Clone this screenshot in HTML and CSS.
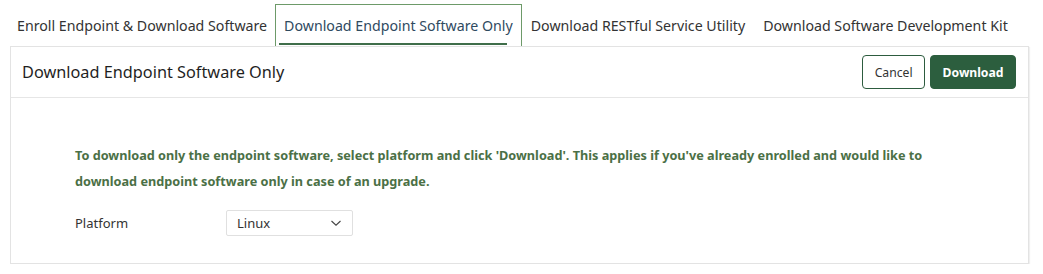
FILE: index.html
```html
<!DOCTYPE html>
<html lang="en">
<head>
  <meta charset="UTF-8">
  <title>Download Endpoint Software</title>
  <link rel="stylesheet" href="styles.css">
</head>
<body>
  <div class="tabs">
    <div class="tab">Enroll Endpoint &amp; Download Software</div>
    <div class="tab active">Download Endpoint Software Only</div>
    <div class="tab">Download RESTful Service Utility</div>
    <div class="tab">Download Software Development Kit</div>
  </div>

  <div class="card">
    <div class="card-header">
      <div class="card-title">Download Endpoint Software Only</div>
      <div class="actions">
        <button class="btn btn-outline">Cancel</button>
        <button class="btn btn-primary">Download</button>
      </div>
    </div>

    <div class="card-body">
      <p class="info">To download only the endpoint software, select platform and click 'Download'. This applies if you've already enrolled and would like to download endpoint software only in case of an upgrade.</p>
      <div class="field">
        <label class="field-label">Platform</label>
        <div class="select">
          <span>Linux</span>
          <svg width="12" height="8" viewBox="0 0 12 8"><path d="M1.5 2 L6 6.2 L10.5 2" fill="none" stroke="#444" stroke-width="1.1"/></svg>
        </div>
      </div>
    </div>
  </div>
</body>
</html>
```

FILE: styles.css
```css
body {
  margin: 0;
  padding: 4px 14px 0 10px;
  font-family: 'Noto Sans', sans-serif;
  color: #333;
  background: #fff;
}

.tabs {
  display: flex;
  height: 42px;
}

.tab {
  font-size: 14.2px;
  padding: 0 8px;
  display: flex;
  align-items: center;
  color: #333;
  border: 1px solid transparent;
  border-bottom: none;
}

.tab:first-child {
  padding: 0 7px 0 6px;
}

.tab.active {
  border-color: #6d9a69;
  color: #2f4a5f;
  position: relative;
}

.tab.active::after {
  content: "";
  position: absolute;
  left: 3px;
  right: 14px;
  bottom: 1px;
  height: 2px;
  background: #3f6e4a;
}

.card {
  border: 1px solid #e3e3e3;
  box-shadow: 1px 1px 1px rgba(0,0,0,0.06);
  height: 216px;
}

.card-header {
  display: flex;
  justify-content: space-between;
  align-items: center;
  height: 50px;
  padding: 0 12px 0 11px;
  border-bottom: 1px solid #e6e6e6;
}

.card-title {
  font-size: 16.3px;
  color: #1f1f1f;
}

.actions {
  display: flex;
  gap: 5px;
}

.btn {
  font-family: 'Noto Sans', sans-serif;
  font-size: 12.2px;
  height: 34px;
  border-radius: 4px;
  padding: 0 11.5px;
  cursor: pointer;
}

.btn-outline {
  background: #fff;
  border: 1px solid #2d5c3f;
  color: #333;
}

.btn-primary {
  background: #2c5e3e;
  border: 1px solid #2c5e3e;
  color: #fff;
  font-weight: bold;
}

.card-body {
  padding: 44px 64px 0 64px;
}

.info {
  margin: 0 0 16px;
  font-size: 12.7px;
  font-weight: bold;
  line-height: 26px;
  color: #4b7046;
  max-width: 880px;
}

.field {
  display: flex;
  align-items: center;
}

.field-label {
  font-size: 13px;
  width: 151px;
}

.select {
  width: 105px;
  height: 24px;
  border: 1px solid #e0e0e0;
  border-radius: 2px;
  padding: 0 10px 0 10px;
  display: flex;
  align-items: center;
  justify-content: space-between;
  font-size: 13px;
}
```
